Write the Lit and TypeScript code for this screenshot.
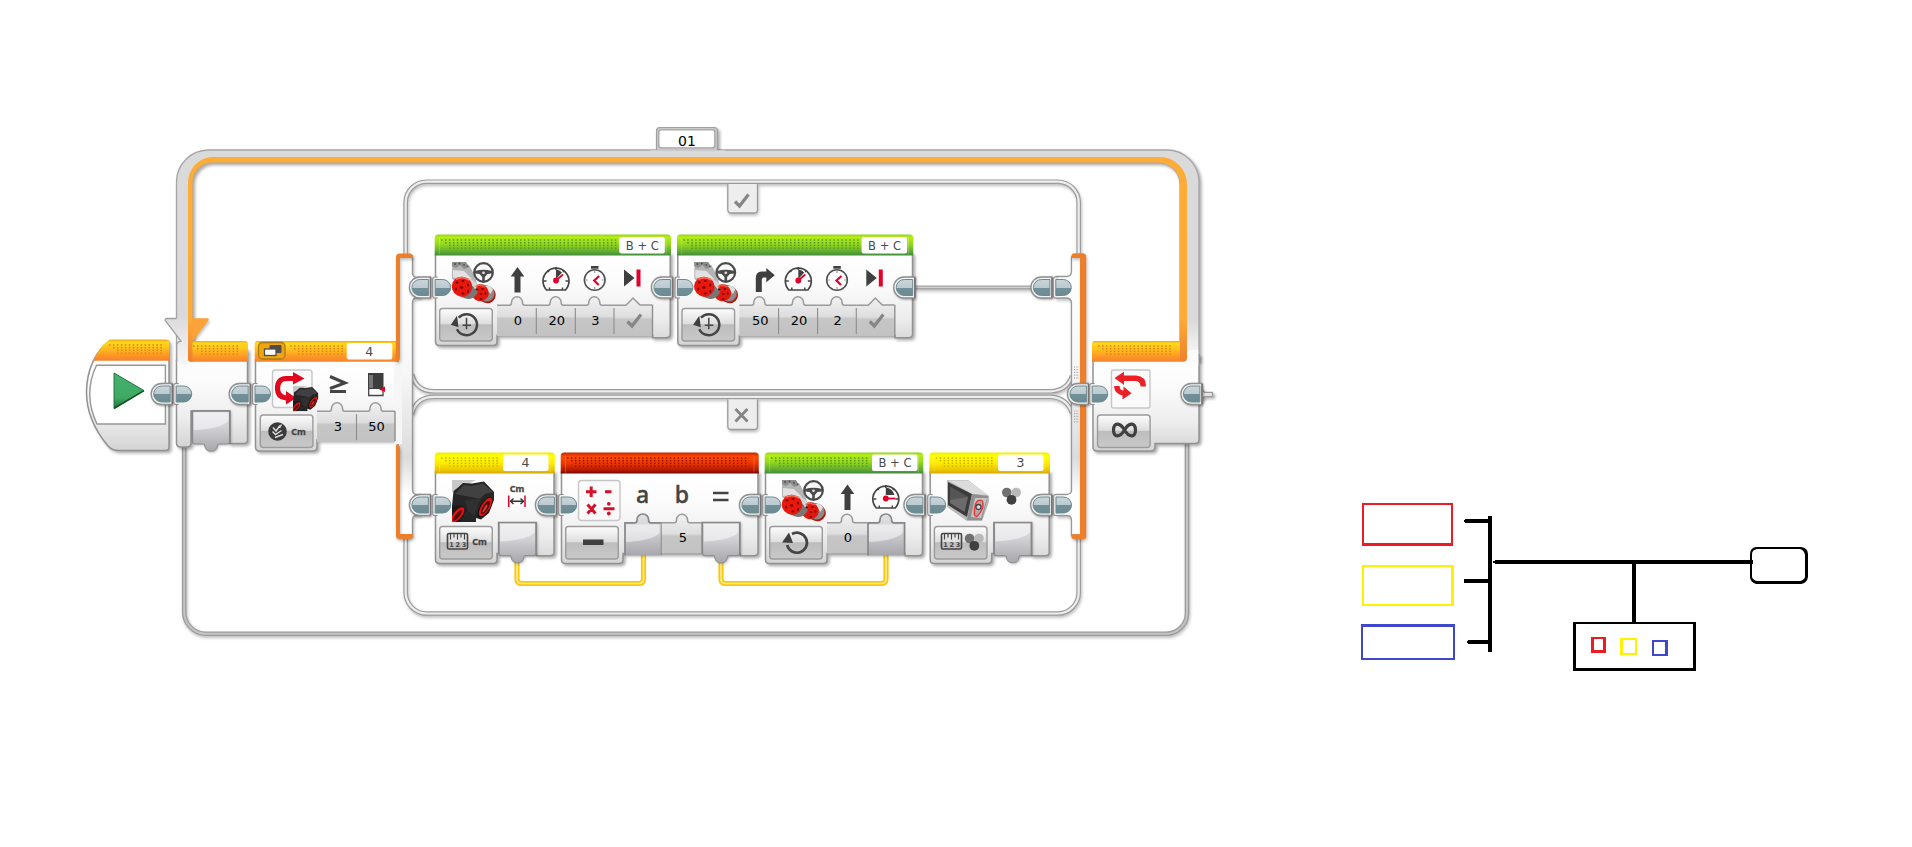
import { LitElement, html, svg, css } from 'lit';
import { customElement } from 'lit/decorators.js';

type Tone = 'green' | 'yellow' | 'red' | 'orange';

const range = (n: number) => Array.from({ length: n }, (_, i) => i);

/* Perforated texture on a header strip, stepped at its left end. */
const dots = (x1: number, x2: number, y: number, tone: Tone) =>
  range(4).map((r) => svg`<line class="dots ${tone}" x1=${x1 + Math.min(r, 2) * 4} x2=${x2} y1=${y + r * 2.7} y2=${y + r * 2.7} />`);

const plugOut = (r: number, cy: number) => svg`
  <g transform="translate(${r + 0.4} ${cy})">
    <path class="case" d="M1.5 -10.5 H-9 A10.5 10.5 0 0 0 -9 10.5 H1.5 Z" />
    <path class="teal" d="M-.5 -8 H-9 A8 8 0 0 0 -9 8 H-.5 Z" />
    <path class="seam" d="M1.7 -10 V10" />
  </g>`;

const plugIn = (l: number, cy: number) => svg`
  <g transform="translate(${l} ${cy})">
    <path class="caseIn" d="M3 -10.5 H0 Q-2 -10.5 -2 -8 V8 Q-2 10.5 0 10.5 H3" />
    <path class="teal" d="M.5 -8 H8 A8 8 0 0 1 8 8 H.5 Z" />
  </g>`;

const pill = (x: number, y: number, text: string, len?: number) => svg`
  <rect class="pill" x=${x} y=${y} width="45.5" height="16.4" rx="2" />
  ${len
    ? svg`<text class="tag" x=${x + 23} y=${y + 12.8} textLength=${len} lengthAdjust="spacingAndGlyphs">${text}</text>`
    : svg`<text class="tag" x=${x + 22.5} y=${y + 12.8}>${text}</text>`}`;

/* Block shell: body with the mode bulge on the left and the coloured strip on top. */
const shell = (x: number, r: number, y: number, tone: Tone, dotsEnd: number) => svg`
  <path class="body" d="M${x + 0.5} ${y + 19} V${y + 107} q0 4 4 4 H${x + 58} q4 0 4 -4 V${y + 101} H${r - 18} V${y + 103.3} H${r - 4.5} q4 0 4 -3.500 V${y + 19} Z" />
  <path class="strip ${tone}" d="M${x - 0.3} ${y + 21} V${y + 3.5} q0 -3.5 3.5 -3.5 H${r - 3.2} q3.5 0 3.5 3.5 V${y + 21} Z" />
  ${dots(x + 6, dotsEnd, y + 5.5, tone)}
  <path class="sheen" d="M${x + 4.5} ${y + 3} V${y + 20} M${r - 4.5} ${y + 3} V${y + 20}" />
  ${modeKey(x + 4.7, y + 74)}`;

const modeKey = (x: number, y: number) => svg`<rect class="key" x=${x} y=${y} width="52.6" height="32.5" rx="3" />`;

/* Value field with a notch (arc or peak) on its upper edge. */
const port = (x: number, w: number, y: number, cx: number, value: string, peak = false) => {
  const notch = peak
    ? `H${cx - 7} L${cx} ${y - 7} L${cx + 7} ${y}`
    : `H${cx - 7.5} q2 0 2 -3 a5.5 5.5 0 0 1 11 0 q0 3 2 3`;
  return svg`
    <path class="port" d="M${x} ${y} ${notch} H${x + w} V${y + 31} H${x} Z" />
    <path class="portTop" d="M${x} ${y + 0.3} ${notch} H${x + w}" />
    <text class="val" x=${cx + 1} y=${y + 19.5}>${value}</text>`;
};
const divider = (x: number, y: number) => svg`<path class="divider" d="M${x} ${y + 3} v26" />`;

const slotOut = (x: number, y: number) => svg`
  <path class="slot" d="M${x} ${y} h37.500 v30 q0 3 -3 3 h-8 q-1.500 0 -1.500 2 a6.300 6 0 0 1 -12.500 0 q0 -2 -1.500 -2 H${x + 3} q-3 0 -3 -3 Z" />
  <path class="gloss" d="M${x + 1.5} ${y + 1.5} h34.500 v8.500 q-8 8 -34.500 9 Z" />
  <path class="slotEdge" d="M${x} ${y + 31} V${y} h37.500 v31" />`;

const slotIn = (x: number, y: number) => svg`
  <path class="slotFlat" d="M${x} ${y} h10.500 q2 0 2 -3 a5.800 5.800 0 0 1 11.600 0 q0 3 2 3 h11 v33 h-37 Z" />
  <path class="gloss" d="M${x + 1} ${y + 2} h34 v8.500 q-8 8 -34 9 Z" />
  <path class="slotEdge" d="M${x + 0.5} ${y + 33} V${y + 0.3} h10 q2 0 2 -3 a5.800 5.800 0 0 1 11.600 0 q0 3 2 3 h11 v32" />`;

const motors = (x: number, y: number) => svg`
  <g transform="translate(${x} ${y})">
    <path fill="#b4b4b4" d="M0 0 L17 3 L22 12 L25 22 L14 24 L0 17 Z" />
    <path fill="#e2e2e2" d="M1 8 L12 9 L20 17 L8 15 L1 16 Z" />
    <path fill="#8d8d8d" d="M0 0 H14 L17 5 L12 7 L8 3 L4 6 L0 4 Z" />
    <g fill="#4b4b4b"><circle cx="3" cy="2" r=".9" /><circle cx="7.500" cy="1.500" r=".9" /><circle cx="12" cy="2.800" r=".9" /><circle cx="15.500" cy="4.500" r=".8" /></g>
    <path d="M31 31 L35.500 33" stroke="#b51208" stroke-width="16.500" stroke-linecap="round" />
    <path d="M30 30.500 L34.500 31.500" stroke="#8a8a8a" stroke-width="16" stroke-linecap="round" />
    <path d="M33 24 Q38 23 41 27.500 L38.500 32 Q36 28 33 28 Z" fill="#dedede" />
    <path d="M27.500 30.500 L28.500 31" stroke="#e3180c" stroke-width="16.500" stroke-linecap="round" />
    <path d="M13 26 L16.500 27.500" stroke="#777" stroke-width="19" stroke-linecap="round" />
    <path d="M15 16.500 Q22 17 25.500 23 L23 27.500 Q20 21 14 21 Z" fill="#d6d6d6" />
    <path d="M9.500 24.500 L10.500 25" stroke="#e8180c" stroke-width="19.500" stroke-linecap="round" />
    <path d="M4 17.500 Q10 13.500 17 18" stroke="#ff6a50" stroke-width="1.500" fill="none" />
    <path d="M23.500 24.500 Q28 22 33 25" stroke="#ff5a40" stroke-width="1.300" fill="none" />
    <g fill="#700"><ellipse cx="5" cy="20.500" rx="1.500" ry="1" /><ellipse cx="11" cy="19" rx="1.500" ry="1" /><ellipse cx="16" cy="23" rx="1" ry="1.500" /><ellipse cx="4" cy="27" rx="1" ry="1.600" /><ellipse cx="9.500" cy="25.500" rx="1.700" ry="1.300" /><ellipse cx="11" cy="31.500" rx="1.600" ry="1" /><ellipse cx="16" cy="29.500" rx="1" ry="1.400" />
      <ellipse cx="25" cy="27.500" rx="1.300" ry=".9" /><ellipse cx="30.500" cy="27" rx="1.300" ry=".9" /><ellipse cx="29" cy="32" rx="1.400" ry="1.100" /><ellipse cx="33.500" cy="31.500" rx=".9" ry="1.300" /><ellipse cx="29" cy="37" rx="1.300" ry=".9" /></g>
    <circle cx="31.500" cy="10.500" r="9.300" fill="#f4f4f4" fill-opacity=".7" stroke="#4a4a4a" stroke-width="2.200" />
    <path d="M23 9 Q31.500 6.500 40 9 V11.500 L35.500 12 L32.800 15 V19 H30.200 V15 L27.500 12 L23 11.500 Z" fill="#4a4a4a" />
    <circle cx="31.500" cy="10.800" r="1.400" fill="#ddd" />
  </g>`;

const eyes = (x: number, y: number, k = 1) => svg`
  <g transform="translate(${x} ${y}) scale(${k})" clip-path="url(#tile)">
    <path fill="#c9c9c9" d="M0 0 H24 L16 4 L0 12 Z" />
    <path fill="#262626" d="M0 26 L1.500 11 L6 7.500 L11 3 L20 3.500 L32 1.500 L42 12 L42 20 L37 33 L29 39.500 L24 38 V42 H0 Z" />
    <path fill="#414141" d="M3 14 L12 5 L19 6 L31 3.500 L41 12 L33 14 L28 19 L19 17 Z" />
    <path fill="#303030" d="M13 20 L29 18 L22 36 L16 31 Z" />
    <path fill="#1a1a1a" d="M0 26 L10 25 L14 30 L8 42 H0 Z" />
    <ellipse cx="5.500" cy="35" rx="4" ry="9.500" transform="rotate(40 5.500 35)" fill="#e81212" />
    <ellipse cx="5.500" cy="35.500" rx="2" ry="7" transform="rotate(40 5.500 35.500)" fill="#5c0a0a" />
    <ellipse cx="33" cy="27.500" rx="5" ry="11.500" transform="rotate(32 33 27.500)" fill="#111" />
    <ellipse cx="33.500" cy="27" rx="4.200" ry="10.600" transform="rotate(32 33.500 27)" fill="#e81212" />
    <ellipse cx="33.500" cy="27.500" rx="2.600" ry="7.800" transform="rotate(32 33.500 27.500)" fill="#4c0a0a" />
    <ellipse cx="33" cy="28.500" rx="1" ry="4.500" transform="rotate(32 33 28.500)" fill="#e04040" />
  </g>`;

const colorCam = (x: number, y: number) => svg`
  <g transform="translate(${x} ${y})">
    <path fill="#b9b9b9" d="M0 0 H21 L42 16 V22 L35 41 H20 L0 27 Z" />
    <path fill="#dcdcdc" d="M1 .5 H21 L41 15 L25 14 Z" />
    <path fill="#3c3c3c" d="M1 2 L25 14 L20 37 L1 25 Z" />
    <path fill="#6b6b6b" d="M3 7 L21 17 L17.500 32 L3 23 Z" />
    <path fill="#555" d="M3 7 L21 17 L3 20 Z" />
    <path fill="#8f8f8f" d="M25 14 L41 16 L35 40 H20 Z" />
    <path fill="#c6c6c6" d="M28 18 L40 18 L34 38 L24 37 Z" />
    <path d="M30.500 21 Q36.500 18 36 25 Q35.500 31 30.500 36 Q26.500 37.500 27.500 31 Q27.500 24 30.500 21 Z" fill="#aaa" stroke="#e33" stroke-width="1.400" />
    <circle cx="31.500" cy="27" r="2.500" fill="#ddd" stroke="#444" stroke-width="1.300" />
  </g>`;

const arrowUp = (cx: number, y: number) => svg`<path class="ink" d="M${cx} ${y} l6.800 9.500 h-3.800 v16 h-6 v-16 h-3.800 Z" />`;
const arrowTurn = (x: number, y: number) => svg`<path class="ink" d="M${x} ${y + 23} V${y + 9} q0 -6.500 6 -6.500 h4.500 V${y - 1} l8.500 7.200 l-8.500 7 v-4.700 h-2.500 q-2 0 -2 2 v12.500 Z" />`;

const gauge = (cx: number, cy: number, high = false) => svg`
  <g transform="translate(${cx} ${cy})">
    <path d="M-9.500 11 A13 13 0 1 1 9.500 11 Z" fill="#fdfdfd" stroke="#444" stroke-width="1.700" stroke-linejoin="round" />
    <path d="M0 -12 V-9 M-12.500 2 h3 M12.500 2 h-3 M-8.500 -8.500 l1.500 1.500 M8.500 -8.500 l-1.500 1.500 M-6.500 11 v-2.500 M6.500 11 v-2.500" stroke="#444" stroke-width="1.500" />
    ${high
      ? svg`<path class="ink" d="M0 -2 V-9.500 A9 9 0 0 1 8.500 -2 Z" /><path d="M0 1.500 H9.500" class="needle" />`
      : svg`<path class="ink" d="M0 0 V-9.500 A9 9 0 0 1 6 -6.500 Z" /><path d="M0 1.500 L7 -4.500" class="needle" />`}
    <circle cx="0" cy="1.500" r="2.900" fill="#e4002b" />
  </g>`;

const stopwatch = (cx: number, cy: number) => svg`
  <g transform="translate(${cx} ${cy})">
    <rect class="ink" x="-3.700" y="-14" width="7.500" height="2.700" />
    <circle cx="0" cy="0" r="10.300" fill="#fdfdfd" stroke="#505050" stroke-width="1.600" />
    <path d="M-8.700 0 h1.500 M8.700 0 h-1.500 M0 8.700 v-1.500 M0 -8.700 v1.500" stroke="#777" stroke-width="1.200" />
    <path d="M4.500 -4 L-.5 .5 L4 5" fill="none" stroke="#e4002b" stroke-width="2.200" />
  </g>`;

const brake = (x: number, y: number) => svg`
  <path class="ink" d="M${x} ${y} l10.500 8.500 l-10.500 8.500 Z" /><rect x=${x + 12.5} y=${y} width="4" height="17" fill="#e4002b" />`;

const tick = (x: number, y: number) => svg`<path class="tick" d="M${x} ${y + 7} L${x + 4.5} ${y + 11.5} L${x + 13.5} ${y}" />`;

const cycle = (cx: number, cy: number, clock: boolean) => svg`
  <g transform="translate(${cx} ${cy})">
    ${clock
      ? svg`<path d="M-7.800 -7 A10.500 10.500 0 1 1 -9.500 4.500" fill="none" stroke="#444" stroke-width="2.500" />
        <path class="ink" d="M-15.700 0 L-9.500 -9 L-8 2.500 Z" />
        <path d="M0 -7 V4.500 M-4 .5 H4.500" stroke="#444" stroke-width="1.500" />`
      : svg`<path d="M-5 -8.500 A10 10 0 1 1 -9.800 2.500" fill="none" stroke="#444" stroke-width="2.700" />
        <path class="ink" d="M-15 0 L-8 -10 L-4 .5 Z" />`}
  </g>`;

const dotsTrio = (cx: number, cy: number) => svg`
  <circle cx=${cx - 4.7} cy=${cy - 3.5} r="4.800" fill="#707070" /><circle cx=${cx + 4.7} cy=${cy - 3.5} r="4.800" fill="#b9b9b9" /><circle cx=${cx} cy=${cy + 3.8} r="4.900" fill="#404040" />`;

const ruler = (x: number, y: number) => svg`
  <rect x=${x} y=${y} width="20" height="15.500" rx="1.500" fill="none" stroke="#444" stroke-width="1.600" />
  <path d="M${x + 3} ${y} v6 M${x + 6.5} ${y} v4 M${x + 10} ${y} v6 M${x + 13.5} ${y} v4 M${x + 17} ${y} v6" stroke="#444" stroke-width="1.200" />
  <text class="tiny" x=${x + 10.3} y=${y + 13.6} textLength="17">1 2 3</text>`;

const timedMotor = (x: number, turn: boolean, values: string[]) => svg`
  ${shell(x, x + 235.7, 234.5, 'green', x + 182)}
  ${pill(x + 184.3, 237, 'B + C', 33)}
  ${port(x + 62, 39, 305, x + 82, values[0])}
  ${port(x + 101, 39, 305, x + 120.7, values[1])}
  ${port(x + 140, 39, 305, x + 159.3, values[2])}
  ${port(x + 179, 38.5, 305, x + 198, '', true)}
  ${divider(x + 101.3, 305)}${divider(x + 140.3, 305)}${divider(x + 179, 305)}
  <path class="edge" d="M${x + 217.5} 305 V337.500" />
  ${tick(x + 192.5, 314.5)}
  ${motors(x + 17, 262)}
  ${turn ? arrowTurn(x + 78.5, 269) : arrowUp(x + 82.5, 267)}
  ${gauge(x + 121, 279)}
  ${stopwatch(x + 159.7, 280)}
  ${brake(x + 189, 269.5)}
  ${cycle(x + 31.5, 324.7, true)}
  ${plugIn(x - 0.3, 287.5)}${plugOut(x + 235.5, 287.5)}`;

@customElement('app-root')
export class AppRoot extends LitElement {
  static styles = css`
    :host { display: block; width: 1912px; height: 847px; background: #fff; overflow: hidden; }
    .canvas { display: block; width: 1912px; height: 847px; }
    text { font-family: 'DejaVu Sans', Verdana, sans-serif; text-anchor: middle; }
    .val { font-size: 13px; fill: #000; }
    .tag { font-size: 12.5px; fill: #4a4a4a; }
    .name { font-size: 14px; fill: #000; }
    .tiny { font-size: 6.5px; font-weight: 700; fill: #444; }
    .cm { font-family: 'Noto Sans', sans-serif; font-size: 9px; font-weight: 700; fill: #444; stroke: #444; stroke-width: 0.3px; }
    .var { font-family: 'Noto Sans', sans-serif; font-size: 23px; font-weight: 500; fill: #444; stroke: #444; stroke-width: 0.4px; }
    .shadow { filter: drop-shadow(2px 2px 1.5px rgba(0, 0, 0, 0.32)); }
    .soft { filter: drop-shadow(1px 2px 1.5px rgba(0, 0, 0, 0.25)); }
    .body { fill: url(#body); stroke: #929292; stroke-width: 1.5; filter: drop-shadow(2px 2px 1.5px rgba(0, 0, 0, 0.32)); }
    .strip.green { fill: url(#green); }
    .strip.yellow { fill: url(#yellow); }
    .strip.red { fill: url(#red); }
    .strip.orange { fill: url(#orange); }
    .dots { stroke-width: 1.4; stroke-dasharray: 1.5 2.45; }
    .dots.green { stroke: #4f9a1c; }
    .dots.yellow { stroke: #c9ad00; }
    .dots.red { stroke: #8f1500; }
    .dots.orange { stroke: #d98312; }
    .sheen { stroke: #fff; stroke-opacity: 0.3; stroke-width: 0.7; fill: none; }
    .key { fill: url(#key); stroke: #9b9b9b; stroke-width: 1.4; }
    .port { fill: url(#port); }
    .portTop { fill: none; stroke: #9a9a9a; stroke-width: 1.5; }
    .edge { stroke: #8f8f8f; stroke-width: 1.4; fill: none; }
    .divider { stroke: #8c8c8c; stroke-width: 1.1; }
    .slot { fill: url(#slot); stroke: #909094; stroke-width: 1.2; filter: drop-shadow(1px 1px 1px rgba(0, 0, 0, 0.25)); }
    .slotFlat { fill: url(#slot); }
    .gloss { fill: #fff; fill-opacity: 0.5; }
    .slotEdge { fill: none; stroke: #87878b; stroke-width: 1.7; }
    .case { fill: #f2f2f2; stroke: #8f8f8f; stroke-width: 1.3; filter: drop-shadow(1px 1px 1px rgba(0, 0, 0, 0.35)); }
    .caseIn { fill: #ededed; stroke: #8f8f8f; stroke-width: 1.2; }
    .teal { fill: url(#teal); stroke: #6b8b92; stroke-width: 1; }
    .seam { stroke: #7d7373; stroke-width: 1.6; }
    .pill { fill: #fff; }
    .ink { fill: #3f3f3f; }
    .needle { stroke: #e4002b; stroke-width: 1.8; }
    .tick { fill: none; stroke: #858585; stroke-width: 3.2; }
    .rail { fill: none; stroke: #9c9c9c; stroke-width: 4.6; }
    .railIn { fill: none; stroke: #ededed; stroke-width: 2.2; }
    .loopIn { fill: none; stroke: #c4c4c4; stroke-width: 2; }
    .wire { fill: none; stroke: #fbc707; stroke-width: 5.2; }
    .wireIn { fill: none; stroke: #ffe9a0; stroke-width: 1.7; }
    .frame { fill: #fafafa; stroke: #c6c6c6; stroke-width: 1.4; }
    .redInk { fill: #e30420; }
    .pen { stroke: #000; stroke-width: 4; fill: none; }
    .r { fill: #ed1c24; }
    .y { fill: #fff200; }
    .b { fill: #3f48cc; }
    .w { fill: #fff; }
    .k { fill: #000; }
  `;

  private defs() {
    const g = (id: string, stops: [string, string][]) => svg`
      <linearGradient id=${id} x1="0" y1="0" x2="0" y2="1">${stops.map(([o, c]) => svg`<stop offset=${o} stop-color=${c} />`)}</linearGradient>`;
    return svg`<defs>
      <clipPath id="tile"><rect width="43" height="42" /></clipPath>
      ${g('body', [['0', '#ffffff'], ['.35', '#fbfbfb'], ['.7', '#ededed'], ['1', '#d4d4d4']])}
      ${g('green', [['0', '#8fcf20'], ['.12', '#b5ee12'], ['.45', '#97d81f'], ['.8', '#63ad30'], ['1', '#3f8c3c']])}
      ${g('yellow', [['0', '#f2ee00'], ['.2', '#ffff00'], ['.5', '#ffec00'], ['.85', '#e9c400'], ['1', '#d6a800']])}
      ${g('red', [['0', '#c62400'], ['.2', '#ff4a00'], ['.5', '#ee3800'], ['.85', '#b51800'], ['1', '#6d0800']])}
      ${g('orange', [['0', '#f2a816'], ['.12', '#ffd91c'], ['.4', '#ffc01e'], ['.75', '#ff9626'], ['1', '#f4822c']])}
      ${g('key', [['0', '#fdfdfd'], ['.47', '#dedede'], ['.5', '#bdbdbd'], ['1', '#c9c9c9']])}
      ${g('port', [['0', '#f2f2f2'], ['.5', '#dedede'], ['.56', '#c6c6c6'], ['1', '#c2c2c2']])}
      ${g('slot', [['0', '#e2e2e5'], ['.4', '#d2d2d6'], ['.8', '#b4b4b9'], ['1', '#a6a6ac']])}
      ${g('teal', [['0', '#c9d5da'], ['.5', '#bccad0'], ['.52', '#71909a'], ['1', '#6c8b92']])}
      ${g('shaft', [['0', '#dadada'], ['.8', '#d9d9d9'], ['1', '#fcfcfc']])}
      ${g('arrowHead', [['0', '#dcdcdc'], ['1', '#f6f6f6']])}
      ${g('colA', [['0', '#ffffff'], ['.4', '#f8f8f8'], ['.58', '#e9e9e9'], ['.72', '#dcdcdc'], ['.85', '#ffffff'], ['1', '#ffffff']])}
      ${g('play', [['0', '#45b070'], ['.7', '#3fa964'], ['1', '#1d6e35']])}
      ${g('amber', [['0', '#fdac38'], ['1', '#f07f2c']])}
    </defs>`;
  }

  private loop() {
    const rail = 'M184.200 446 V611 A22 22 0 0 0 206 633.800 H1166 A21 21 0 0 0 1187 612 V444';
    return svg`
      <g class="soft"><path class="rail" d=${rail} /><path class="loopIn" d=${rail} /></g>
      <g class="shadow">
        <path fill="url(#shaft)" stroke="#a5a5a5" stroke-width="1.300" d="M176.500 361 V181 A32 32 0 0 1 208 150 H1167 A32 32 0 0 1 1199 181 V361 H1180 V185 A22 22 0 0 0 1158 162.500 H212 A20 20 0 0 0 192.500 183 V361 Z" />
        <path fill="#fdac38" d="M188 357 V183 A25 26 0 0 1 213 157 H1160 A27 27 0 0 1 1187 184 V357 H1180 V185 A22 22 0 0 0 1158 162.500 H212 A20 20 0 0 0 192.500 183 V357 Z" />
      </g>
      <g class="shadow">
        <path fill="#c9c9c9" stroke="#a0a0a0" stroke-width="1.200" d="M656.500 150 V131 q0 -3.500 3.500 -3.500 H714 q3.500 0 3.500 3.500 V150" />
      </g>
      <rect x="650" y="150.200" width="75" height="6.500" fill="#dadada" />
      <rect x="658.800" y="129.800" width="56" height="18" rx="2.500" fill="#fff" stroke="#a5a5a5" stroke-width="1.300" />
      <text class="name" x="687" y="146">01</text>`;
  }

  private start() {
    return svg`
      <path class="body" d="M110 340.500 H166 q3 0 3 3 V447 q0 3.500 -3.500 3.500 H119 Q112 450.500 108 446 C98 434 86.500 416 86.500 392 C86.500 370 96 350 110 340.500 Z" />
      <path class="strip orange" d="M110 339.800 H166.500 q3 0 3 3 V360.700 H93.500 C97 352 103 343 110 339.800 Z" />
      ${dots(109, 164, 345, 'orange')}
      <path d="M96.500 365.200 H165.400 V424 H97 C87.500 404 87.500 384 96.500 365.200 Z" fill="#fff" stroke="#979797" stroke-width="1.400" />
      <path d="M114 373 L144 390.600 L114 408.500 Z" fill="url(#play)" stroke="#1f7a3d" stroke-width="1" />
      <path d="M114 408.500 L144 390.600" stroke="#145226" stroke-width="1.500" />
      <path class="body" d="M176.500 360 V443 q0 4 4 4 H187 q4 0 4 -4 V411 H229.500 V443.500 H244 q3.500 0 3.500 -3.500 V350 H186 Z" />
      <path fill="url(#arrowHead)" d="M188 318.500 H166 Q164.500 319 165.500 321 L181 341 L177.200 344 V364 H188 Z" />
      <path fill="none" stroke="#9f9f9f" stroke-width="1.300" d="M176.500 318.500 H166.500 Q164.500 319 165.500 321 L181 341 Q177 342 176.700 345 V362" />
      <path class="soft" fill="#fba338" d="M190 318.300 H208 Q209.500 319 208 321 L192.500 341.500 H190 Z" />
      <path class="strip orange" d="M188 341 H245 q3 0 3 3 V361.700 H191 q-3 0 -3 -3 Z" />
      <path fill="url(#amber)" d="M188 318.500 H192.500 V361.700 H191 q-3 0 -3 -3 Z" />
      ${dots(193, 238, 346, 'orange')}
      ${slotOut(192.300, 411)}
      ${plugOut(170.300, 394)}${plugIn(175.700, 394)}${plugOut(248.300, 394)}`;
  }

  private switchBlock() {
    const top = 'M405.700 256 V202 A21 20.500 0 0 1 427 181.700 H1058 A21 20.500 0 0 1 1078.700 202 V256';
    const bottom = 'M405.700 536 V592 A21 21 0 0 0 427 613.500 H1058 A21 21 0 0 0 1078.700 592 V536';
    const mid1 = 'M412 374 Q416 391.300 434 391.300 H1051 Q1067 390.500 1072 376';
    const mid2 = 'M412 414 Q416 396.800 434 396.800 H1051 Q1067 398 1072 413';
    return svg`
      <g class="soft">
        ${[top, bottom, mid1, mid2].map((d) => svg`<path class="rail" d=${d} /><path class="railIn" d=${d} />`)}
      </g>
      <path class="body" d="M255.500 360 V447 q0 4 4 4 H313 q4 0 4 -4 V440 H397 V360 Z" />
      <path class="strip orange" d="M254.700 361.700 V344 q0 -3 3 -3 H397 V361.700 Z" />
      ${dots(290, 344, 346, 'orange')}
      <rect x="258.500" y="342.500" width="26.500" height="16.500" rx="4" fill="#f1a50c" stroke="#a67a1c" stroke-width="1.300" />
      <rect x="269.500" y="345" width="12" height="8" rx="1" fill="#4d4d4d" />
      <rect x="264.500" y="349" width="11.500" height="6.500" fill="#fff" stroke="#4d4d4d" stroke-width="1.300" />
      ${pill(346.800, 343, '4')}
      <path class="soft" fill="url(#colA)" stroke="#989898" stroke-width="1.400" d="M398 256 H412.500 V273 q0 4 4 4.500 H420 V297.500 H417 q-4.500 .5 -4.500 5 V490 q0 4 4 4.500 H420 V515 H417 q-4.500 .5 -4.500 5 V536 H398 Z" />
      <path fill="#f6f6f6" d="M394 362 H402 V444 H394 Z" />
      <path class="soft" fill="#ee7f2a" d="M396 362 V257 q0 -3.500 3.500 -3.500 H410 q3 0 3 4.500 H400 V358 q0 3.500 -4 3.700 Z M396 444.500 q4 0 4 4 V534 H413 q0 5 -3 5 H399.500 q-3.500 0 -3.500 -3.500 Z" />
      ${modeKey(260.300, 415)}
      ${port(317, 39.500, 411, 337, '3')}
      ${port(356.500, 38.500, 411, 375.500, '50')}
      ${divider(356.500, 411)}<path class="edge" d="M395 411 V441" />
      <rect class="frame" x="272.500" y="370" width="39.500" height="37.500" rx="3" />
      <path d="M295 378.500 H286 Q277.500 379 277.500 388.500 Q277.500 397 286 398 H289" fill="none" stroke="#e0061e" stroke-width="5.200" />
      <path class="redInk" d="M293 372 L304.500 378.500 L293 384.500 Z M286 391 L296 398 L286 404.500 Z" />
      ${eyes(293, 386, 0.6)}
      <path d="M330 376.500 L345 383 L330 388.500 M330 391.500 H346" fill="none" stroke="#444" stroke-width="3" />
      <rect x="368" y="373" width="15.500" height="17" fill="#3d3d3d" /><rect x="369" y="375" width="4" height="13" fill="#777" />
      <path d="M368.700 389 V395.500 H383 V389" fill="#fff" stroke="#444" stroke-width="1.300" />
      <path class="redInk" d="M379 389.500 L385 386.500 V392 Z" />
      <circle cx="277.500" cy="431.500" r="9.300" fill="#3a3a3a" />
      <path d="M273 427.500 L276 431 L280 425.500 M281.500 424.500 L279.500 428 M272.500 431.500 L275.500 434.500 L281.500 430.500 M275 437.500 L283 434.500" fill="none" stroke="#ddd" stroke-width="1.400" />
      <text class="cm" x="298.500" y="435">Cm</text>

      <path class="soft" fill="#ededed" stroke="#9b9b9b" stroke-width="1.300" d="M727.800 184 V209.500 q0 3.500 3.500 3.500 H754 q3.500 0 3.500 -3.500 V184" />
      ${tick(735, 194.500)}
      <path class="soft" fill="#ededed" stroke="#9b9b9b" stroke-width="1.300" d="M727.800 399.500 V426.500 q0 3 3.500 3 H754 q3.500 0 3.500 -3 V399.500" />
      <path d="M735.500 409 L747.500 421.500 M747.500 409 L735.500 421.500" stroke="#858585" stroke-width="2.800" />

      <path class="soft" d="M914 287.500 H1032" stroke="#a6a6a6" stroke-width="4" /><path d="M914 287.300 H1032" stroke="#cfcfcf" stroke-width="1.200" />
      <path class="soft" fill="url(#colA)" stroke="#989898" stroke-width="1.300" d="M1081 257 H1071.500 V271 q0 5.500 -5 5.500 H1056 V298 H1066 q5.500 0 5.500 5 V490 q0 4 -4.500 4.500 H1057 V515.500 H1067 q4.500 0 4.500 5 V535 H1081 Z" />
      <path class="soft" fill="#ee7f2a" d="M1080 258 H1071 q0 -4.700 3.500 -4.700 H1082.500 q3.700 0 3.700 3.700 V536 q0 3.200 -3.200 3.200 H1074.500 q-3.500 0 -3.500 -5 H1080 Z" />
      ${[367, 411].map((y) => range(5).map((r) => svg`<line x1="1074" x2="1079" y1=${y + r * 2.7} y2=${y + r * 2.7} stroke="#a5a5a5" stroke-width="1.200" stroke-dasharray="1.200 1.200" />`))}
      ${plugIn(254.500, 394)}${plugOut(428.500, 287.500)}${plugOut(428.500, 505)}
      ${plugOut(1050, 287.500)}${plugIn(1055.300, 287.500)}${plugOut(1086.500, 394)}`;
  }

  private loopEnd() {
    return svg`
      <path class="shadow" fill="#e4e4e4" stroke="#9a9a9a" stroke-width="1.200" d="M1199 386 L1204.500 392.300 H1212.500 V396.500 H1204.500 L1199 402 Z" />
      <path class="body" d="M1093 355 V447 q0 4 4 4 H1151 q4 0 4 -4 V443.500 H1195 q4 0 4 -4 V355 Z" />
      <path fill="#fcfcfc" d="M1188 350 H1198.300 V366 H1178 Z" />
      <path fill="url(#amber)" d="M1180 318 H1187 V358 q0 3.700 -3.700 3.700 H1180 Z" />
      <path class="strip orange" d="M1092 361.700 V344 q0 -3 3 -3 H1180 V361.700 Z" />
      ${dots(1098, 1172, 346, 'orange')}
      <rect class="frame" x="1111.500" y="370" width="38.500" height="38" rx="2" />
      <path fill="#ec2024" d="M1114.500 378 L1124 371.800 V375.500 H1136 Q1146 376 1146 386.500 H1140.500 Q1140.500 381 1135 381 H1124 V385 Z M1114 386 H1119.500 Q1120 390.500 1123.500 390.500 V386.500 L1131.500 393.200 L1122.500 399.500 V395.500 Q1114.500 394 1114 386 Z" />
      ${modeKey(1097.500, 415)}
      <path d="M1124.500 430 C1120.500 423 1113.500 421.500 1113.500 430 C1113.500 438.500 1120.500 437 1124.500 430 C1128.500 423 1135.500 421.500 1135.500 430 C1135.500 438.500 1128.500 437 1124.500 430 Z" fill="none" stroke="#3f3f3f" stroke-width="3.200" />
      ${plugIn(1091.700, 394)}${plugOut(1200, 394)}`;
  }

  private lowerRow() {
    const w1 = 'M517 562 V579 q0 4.500 4.500 4.500 H639 q4.500 0 4.500 -4.500 V555';
    const w2 = 'M721 562 V579 q0 4.500 4.500 4.500 H881.500 q4.500 0 4.500 -4.500 V555';
    return svg`
      ${[w1, w2].map((d) => svg`<path class="wire" d=${d} /><path class="wireIn" d=${d} />`)}
      ${shell(435, 554.500, 452.500, 'yellow', 499)}
      ${pill(503, 454.500, '4')}${slotOut(498.700, 522.500)}
      ${eyes(452, 480)}
      <text class="cm" x="517" y="491.500">Cm</text>
      <path d="M508.700 495.500 V507 M525 495.500 V507" stroke="#e4002b" stroke-width="1.500" />
      <path d="M511 501.300 H523 M513.500 498.500 L510.500 501.300 L513.500 504 M520.500 498.500 L523.500 501.300 L520.500 504" fill="none" stroke="#333" stroke-width="1.400" />
      ${ruler(447.500, 533.500)}<text class="cm" x="479.500" y="545">Cm</text>
      ${plugIn(434.700, 505)}${plugOut(554.500, 505)}

      ${shell(561, 758.500, 452.500, 'red', 749)}
      ${slotIn(624.500, 522.500)}${port(661.700, 40, 522.500, 682, '5')}${slotOut(702.300, 522.500)}
      <rect class="frame" x="578.500" y="480.500" width="41.500" height="40" rx="3" />
      <g stroke="#d3122a" stroke-width="3" fill="none">
        <path d="M586 491.700 h10.500 M591.200 486.500 v10.500 M605 491.700 h6.500 M587.500 504.500 l8 9 M595.500 504.500 l-8 9 M603.500 508.700 h11" />
      </g>
      <circle cx="608.800" cy="503.800" r="1.900" fill="#d3122a" /><circle cx="608.800" cy="513.500" r="1.900" fill="#d3122a" />
      <text class="var" x="642.500" y="502.800">a</text><text class="var" x="682" y="502.800">b</text>
      <path d="M713 493 H728.500 M713 500 H728.500" stroke="#444" stroke-width="2.400" />
      <rect class="ink" x="583" y="539.500" width="20.500" height="5.500" />
      ${plugIn(560.700, 505)}${plugOut(758.500, 505)}

      ${shell(765, 923, 452.500, 'green', 868)}
      ${pill(872, 454.500, 'B + C', 33)}
      ${port(827, 40.500, 522.500, 847, '0')}${slotIn(867.500, 522.500)}
      ${motors(782, 480)}${arrowUp(847.500, 484.500)}${gauge(885.800, 497, true)}${cycle(797, 542.500, false)}
      ${plugIn(764.700, 505)}${plugOut(923, 505)}

      ${shell(929.700, 1049.700, 452.500, 'yellow', 993)}
      ${pill(998, 454.500, '3')}${slotOut(994, 522.500)}
      ${colorCam(947, 480)}${dotsTrio(1011.500, 496)}
      ${ruler(941.500, 533.500)}${dotsTrio(974.300, 542)}
      ${plugIn(929.700, 505)}${plugOut(1049.700, 505)}${plugIn(1055.500, 505)}`;
  }

  private sketch() {
    const box = (c: string, x: number, y: number, w: number, h: number, l: number, t: number, r: number, b: number) => svg`
      <rect class=${c} x=${x} y=${y} width=${w} height=${h} /><rect class="w" x=${x + l} y=${y + t} width=${w - l - r} height=${h - t - b} />`;
    return svg`
      <g shape-rendering="crispEdges">
        ${box('r', 1362, 503, 91, 43, 2, 2, 2, 3)}
        ${box('y', 1362, 565, 92, 41, 2, 2, 3, 2)}
        ${box('b', 1361, 624, 94, 36, 2, 3, 2, 2)}
        <path class="pen" d="M1490 516 V652 M1465 521 H1489 M1464 581 H1489 M1468 642 H1489 M1495 562 H1753 M1634 563 V623" />
        <path d="M1464 521 h2 M1467 642 h2 M1493 562 h2" stroke="#000" stroke-width="2" />
        ${box('k', 1573, 622, 123, 49, 3, 2, 3, 3)}
        ${box('r', 1591, 637, 15, 16, 3, 2, 3, 3)}
        ${box('y', 1620, 638, 17, 17, 3, 2, 2, 2)}
        ${box('b', 1652, 640, 16, 16, 2, 2, 3, 2)}
      </g>
      <path fill-rule="evenodd" d="M1756 547 H1801 Q1808 548 1808 554 V577 Q1807 583 1801 584 H1756 Q1750 582 1750 577 V554 Q1750 548 1756 547 Z M1757 549 Q1752 550 1752 554 V577 Q1753 580 1757 581 H1800 Q1804 580 1805 577 V555 Q1804 550 1800 549 Z" />`;
  }

  render() {
    return html`<svg class="canvas" viewBox="0 0 1912 847">
      ${this.defs()}
      ${this.loop()}
      ${this.start()}
      ${this.switchBlock()}
      ${timedMotor(435, false, ['0', '20', '3'])}
      ${timedMotor(677.300, true, ['50', '20', '2'])}
      ${this.lowerRow()}
      ${this.loopEnd()}
      ${this.sketch()}
    </svg>`;
  }
}
